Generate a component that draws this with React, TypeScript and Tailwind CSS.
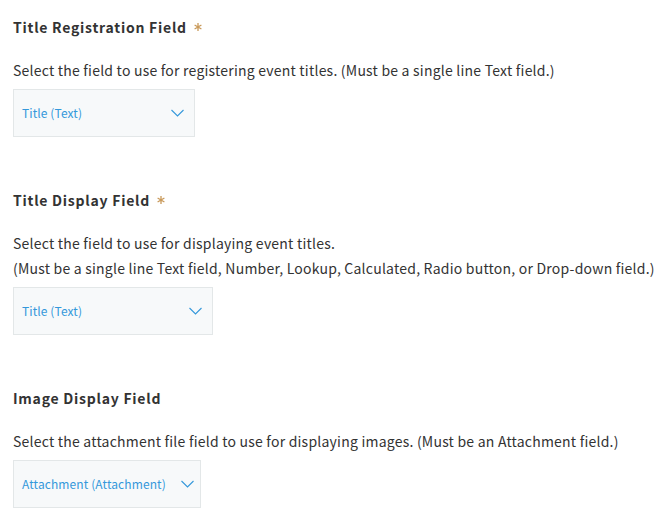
import React from "react";

function Chevron() {
  return (
    <svg width="13" height="8" viewBox="0 0 13 8" fill="none" className="shrink-0">
      <path d="M0.5 1l6 6 6-6" stroke="#3498db" strokeWidth="1.1" />
    </svg>
  );
}

function RequiredMark() {
  return (
    <svg width="8" height="8" viewBox="0 0 8 8" className="shrink-0" stroke="#c99a5b" strokeWidth="1.3">
      <path d="M4 0v8M0.6 2l6.8 4M0.6 6l6.8-4" />
    </svg>
  );
}

function FieldSelect({ label, width }: { label: string; width: string }) {
  return (
    <div
      className={`mt-[6px] flex h-[48px] items-center justify-between gap-[15px] border border-[#e3e7e8] bg-[#f7f9fa] pl-[8px] pr-[10px] ${width}`}
    >
      <span className="whitespace-nowrap text-[12px] tracking-[0.1px] text-[#3498db]">{label}</span>
      <Chevron />
    </div>
  );
}

function Section({
  title,
  required,
  lines,
  value,
  width,
}: {
  title: string;
  required?: boolean;
  lines: string[];
  value: string;
  width: string;
}) {
  return (
    <div>
      <div className="flex h-[20px] items-center gap-[7px] text-[14px] font-bold tracking-[0.75px] text-[#333]">
        <span>{title}</span>
        {required && <RequiredMark />}
      </div>
      <div className="mt-[21px] whitespace-nowrap text-[14px] leading-[25px] tracking-[0.22px] text-[#333]">
        {lines.map((l) => (
          <div key={l}>{l}</div>
        ))}
      </div>
      <FieldSelect label={value} width={width} />
    </div>
  );
}

export default function App() {
  return (
    <div
      className="flex h-[520px] w-[662px] flex-col gap-[53px] bg-white pl-[13px] pt-[17px]"
      style={{ fontFamily: '"Noto Sans CJK JP", "Noto Sans", sans-serif' }}
    >
      <Section
        title="Title Registration Field"
        required
        lines={["Select the field to use for registering event titles.  (Must be a single line Text field.)"]}
        value="Title (Text)"
        width="w-[182px]"
      />
      <Section
        title="Title Display Field"
        required
        lines={[
          "Select the field to use for displaying event titles.",
          "(Must be a single line Text field, Number, Lookup, Calculated, Radio button, or Drop-down field.)",
        ]}
        value="Title (Text)"
        width="w-[200px]"
      />
      <Section
        title="Image Display Field"
        lines={["Select the attachment file field to use for displaying images.  (Must be an Attachment field.)"]}
        value="Attachment (Attachment)"
        width="w-[188px]"
      />
    </div>
  );
}
